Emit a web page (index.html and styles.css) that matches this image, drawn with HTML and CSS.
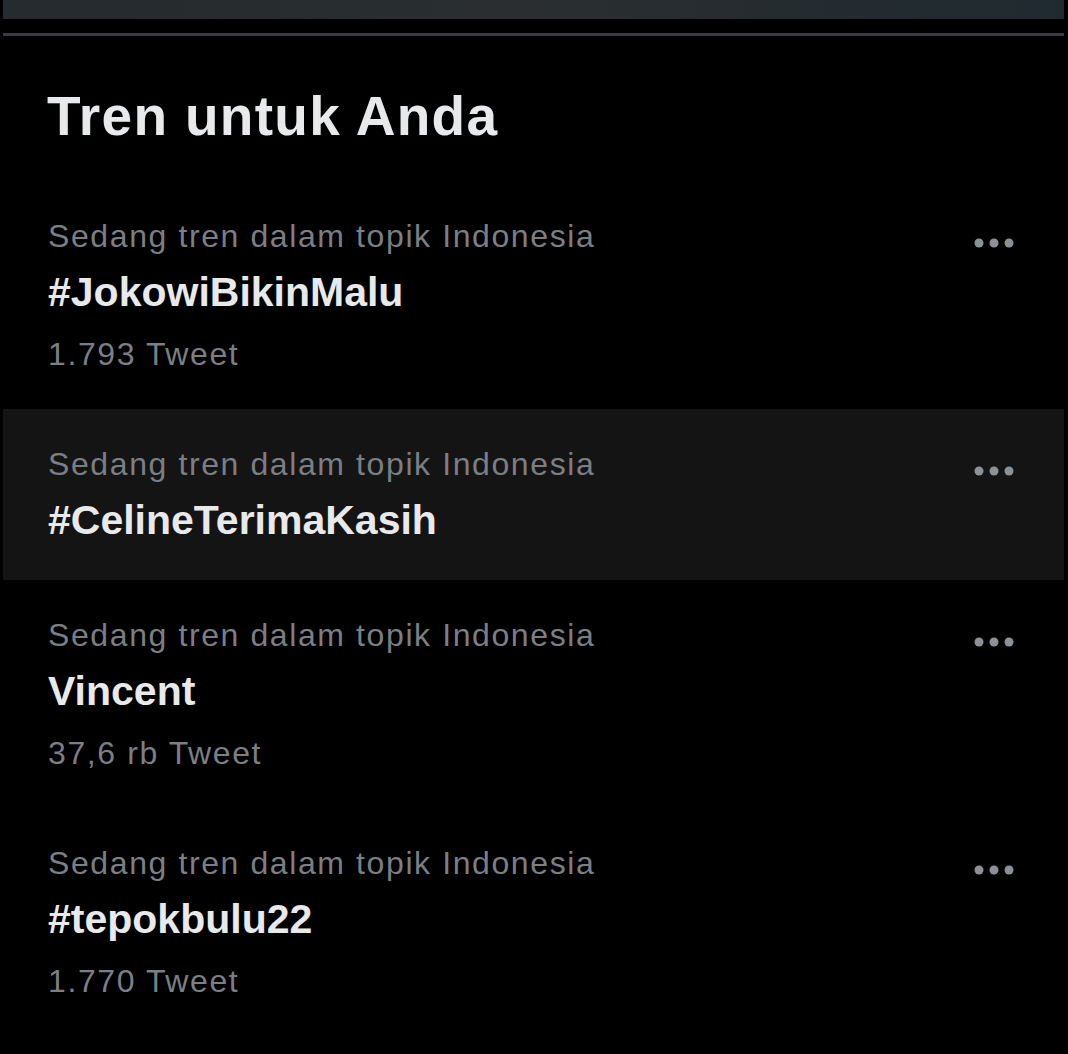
FILE: index.html
```
<!DOCTYPE html>
<html>
<head>
  <title>Tren untuk Anda</title>
  <link rel="stylesheet" href="styles.css">
</head>
<body>
  <div class="top-bar"></div>
  <div class="divider"></div>

  <h2 class="heading">Tren untuk Anda</h2>

  <!-- Trend list -->
  <div class="trend">
    <div class="trend-text">
      <div class="trend-meta">Sedang tren dalam topik Indonesia</div>
      <div class="trend-name">#JokowiBikinMalu</div>
      <div class="trend-count">1.793 Tweet</div>
    </div>
    <svg class="more" viewBox="0 0 40 10"><circle cx="5" cy="5" r="4.5"/><circle cx="20" cy="5" r="4.5"/><circle cx="35" cy="5" r="4.5"/></svg>
  </div>

  <div class="trend active no-count">
    <div class="trend-text">
      <div class="trend-meta">Sedang tren dalam topik Indonesia</div>
      <div class="trend-name">#CelineTerimaKasih</div>
    </div>
    <svg class="more" viewBox="0 0 40 10"><circle cx="5" cy="5" r="4.5"/><circle cx="20" cy="5" r="4.5"/><circle cx="35" cy="5" r="4.5"/></svg>
  </div>

  <div class="trend">
    <div class="trend-text">
      <div class="trend-meta">Sedang tren dalam topik Indonesia</div>
      <div class="trend-name">Vincent</div>
      <div class="trend-count">37,6 rb Tweet</div>
    </div>
    <svg class="more" viewBox="0 0 40 10"><circle cx="5" cy="5" r="4.5"/><circle cx="20" cy="5" r="4.5"/><circle cx="35" cy="5" r="4.5"/></svg>
  </div>

  <div class="trend">
    <div class="trend-text">
      <div class="trend-meta">Sedang tren dalam topik Indonesia</div>
      <div class="trend-name">#tepokbulu22</div>
      <div class="trend-count">1.770 Tweet</div>
    </div>
    <svg class="more" viewBox="0 0 40 10"><circle cx="5" cy="5" r="4.5"/><circle cx="20" cy="5" r="4.5"/><circle cx="35" cy="5" r="4.5"/></svg>
  </div>
</body>
</html>
```

FILE: styles.css
```
body { margin: 0; background: #000; font-family: "Liberation Sans", Arial, sans-serif; color: #e7e9ea; overflow: hidden; }
.top-bar { height: 19px; margin: 0 4px 0 3px; background: linear-gradient(90deg, #252b2e, #2a2e30 50%, #1f2a30); }
.divider { height: 3px; margin: 14px 4px 0 3px; background: #3b3b42; }

.heading { margin: 0; padding: 50px 0 0 47px; font-size: 55px; line-height: 60px; font-weight: bold; letter-spacing: 1.3px; height: 95px; }

.trend { display: flex; justify-content: space-between; margin: 0 4px 0 3px; padding: 27px 50px 27px 45px; }
.trend.no-count { padding-bottom: 32px; }
.trend.active { background: #141414; }
.trend-meta { font-size: 32px; line-height: 56px; letter-spacing: 1.6px; color: #7b7f84; }
.trend-name { font-size: 41px; line-height: 56px; font-weight: bold; }
.trend-count { font-size: 32px; line-height: 56px; letter-spacing: 1.6px; margin-top: 6px; color: #7b7f84; }
.more { width: 40px; height: 10px; margin-top: 30px; fill: #8d9196; }
```
